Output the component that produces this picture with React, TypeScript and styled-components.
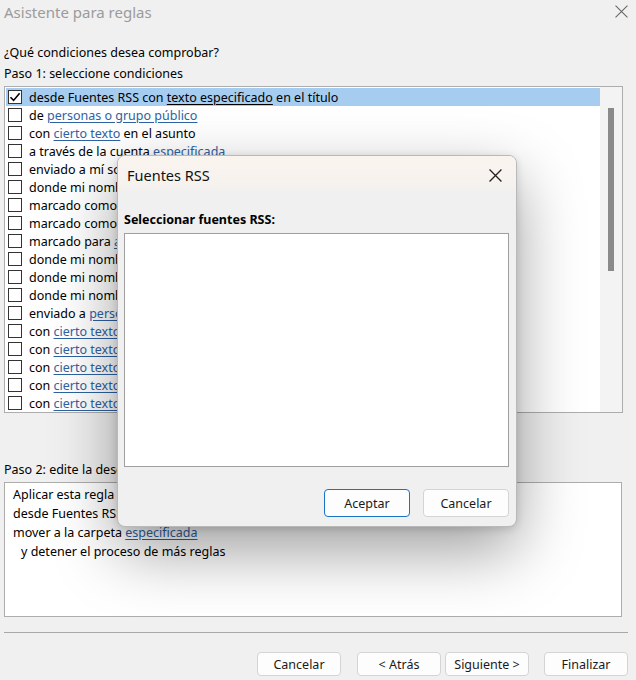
import React from "react";
import styled, { createGlobalStyle } from "styled-components";

const GlobalStyle = createGlobalStyle`
  html, body { margin: 0; padding: 0; background: #f0f0f0; }
  body { font-family: "Segoe UI", "Noto Sans", "Open Sans", sans-serif; color: #000; }
  * { box-sizing: border-box; }
`;

const Window = styled.div`
  position: relative;
  width: 636px;
  height: 680px;
  overflow: hidden;
  background: #f0f0f0;
  font-size: 12.5px;
`;

const TitleBar = styled.div`
  height: 23px;
  display: flex;
  align-items: center;
  justify-content: space-between;
  padding: 0 8px 0 4px;
`;

const TitleText = styled.div`
  font-size: 15px;
  color: #9b9b9b;
`;

const CloseButton = styled.div<{ $size: number; $color: string }>`
  width: ${(p) => p.$size}px;
  height: ${(p) => p.$size}px;
  display: flex;
  align-items: center;
  justify-content: center;
  color: ${(p) => p.$color};
`;

const Body = styled.div`
  padding: 0 4px;
  display: flex;
  flex-direction: column;
`;

const Label = styled.div<{ $top: number }>`
  margin-top: ${(p) => p.$top}px;
  height: 18px;
  line-height: 18px;
  white-space: nowrap;
`;

const ListBox = styled.div`
  margin-top: 3px;
  margin-right: 9px;
  height: 327px;
  border: 1px solid #adadad;
  background: #fff;
  display: flex;
`;

const Rows = styled.div`
  flex: 1;
  padding: 1px 0 0 1px;
  display: flex;
  flex-direction: column;
`;

const Row = styled.div<{ $selected?: boolean }>`
  height: 18px;
  display: flex;
  align-items: center;
  gap: 7px;
  padding-left: 2px;
  white-space: nowrap;
  background: ${(p) => (p.$selected ? "#a6ccf0" : "transparent")};
`;

const Box = styled.div`
  width: 14px;
  height: 14px;
  border: 1px solid #333;
  background: #fff;
  display: flex;
  align-items: center;
  justify-content: center;
  flex-shrink: 0;
`;

const Link = styled.span<{ $plain?: boolean }>`
  color: ${(p) => (p.$plain ? "#000" : "#2e62a3")};
  text-decoration: underline;
  text-underline-offset: 2px;
`;

const ScrollTrack = styled.div`
  width: 22px;
  background: #f3f3f3;
  display: flex;
  justify-content: center;
  padding-top: 21px;
`;

const ScrollThumb = styled.div`
  width: 6px;
  height: 163px;
  background: #8a8a8a;
`;

const DescBox = styled.div`
  margin-top: 3px;
  margin-right: 10px;
  height: 135px;
  border: 1px solid #adadad;
  background: #fff;
  padding: 2px 8px;
  display: flex;
  flex-direction: column;
`;

const DescLine = styled.div<{ $indent?: boolean }>`
  height: 19px;
  line-height: 19px;
  padding-left: ${(p) => (p.$indent ? 8 : 0)}px;
  white-space: nowrap;
`;

const Separator = styled.div`
  margin-top: 15px;
  height: 1px;
  background: #a8a8a8;
  margin-right: 4px;
`;

const Footer = styled.div`
  margin-top: 19px;
  display: flex;
  justify-content: flex-end;
  padding-right: 4px;
  gap: 4px;
`;

const Button = styled.button<{ $gapLeft?: number; $primary?: boolean; $w?: number; $h?: number }>`
  width: ${(p) => p.$w ?? 84}px;
  height: ${(p) => p.$h ?? 24}px;
  margin-left: ${(p) => p.$gapLeft ?? 0}px;
  border: 1px solid ${(p) => (p.$primary ? "#1a73c4" : "#d4d4d4")};
  border-radius: 4px;
  background: #fdfdfd;
  font-family: inherit;
  font-size: 12.5px;
  color: #1a1a1a;
  padding: 0;
  cursor: default;
`;

const Dialog = styled.div`
  position: absolute;
  left: 117px;
  top: 155px;
  width: 400px;
  height: 372px;
  border: 1px solid #b9b9b9;
  border-radius: 8px;
  background: #f0f0f0;
  box-shadow: 0 24px 64px rgba(0, 0, 0, 0.38), 0 2px 8px rgba(0, 0, 0, 0.14);
  overflow: hidden;
  display: flex;
  flex-direction: column;
`;

const DialogHeader = styled.div`
  height: 38px;
  display: flex;
  align-items: center;
  justify-content: space-between;
  padding: 0 14px 0 9px;
  background: linear-gradient(180deg, rgba(250, 244, 238, 1) 0%, rgba(246, 242, 238, 1) 70%, #f0f0f0 100%);
`;

const DialogTitle = styled.div`
  font-size: 14.5px;
  color: #111;
`;

const DialogBody = styled.div`
  flex: 1;
  padding: 17px 7px 0 6px;
  display: flex;
  flex-direction: column;
`;

const BoldLabel = styled.div`
  font-weight: bold;
  font-size: 12.5px;
  height: 18px;
  line-height: 18px;
`;

const FeedList = styled.div`
  margin-top: 4px;
  height: 234px;
  background: #fff;
  border: 1px solid #9f9f9f;
`;

const DialogFooter = styled.div`
  margin-top: 22px;
  display: flex;
  justify-content: flex-end;
  gap: 13px;
`;

const XIcon = ({ size, stroke }: { size: number; stroke: number }) => (
  <svg width={size} height={size} viewBox="0 0 12 12" fill="none">
    <path d="M0.5 0.5 L11.5 11.5 M11.5 0.5 L0.5 11.5" stroke="currentColor" strokeWidth={stroke} />
  </svg>
);

const Check = () => (
  <svg width="12" height="12" viewBox="0 0 12 12" fill="none">
    <path d="M1.5 6.2 L4.6 9.4 L10.6 2.2" stroke="#000" strokeWidth="1.6" />
  </svg>
);

type Part = string | { link: string };

const rows: Part[][] = [
  ["desde Fuentes RSS con ", { link: "texto especificado" }, " en el título"],
  ["de ", { link: "personas o grupo público" }],
  ["con ", { link: "cierto texto" }, " en el asunto"],
  ["a través de la cuenta ", { link: "especificada" }],
  ["enviado a mí solamente"],
  ["donde mi nombre está en el cuadro Para"],
  ["marcado como ", { link: "importancia" }],
  ["marcado como ", { link: "confidencialidad" }],
  ["marcado para ", { link: "acción" }],
  ["donde mi nombre está en el cuadro CC"],
  ["donde mi nombre está en Para o CC"],
  ["donde mi nombre no está en Para"],
  ["enviado a ", { link: "personas o grupo público" }],
  ["con ", { link: "cierto texto" }, " en el cuerpo"],
  ["con ", { link: "cierto texto" }, " en el asunto o cuerpo"],
  ["con ", { link: "cierto texto" }, " en el encabezado"],
  ["con ", { link: "cierto texto" }, " en la dirección del destinatario"],
  ["con ", { link: "cierto texto" }, " en la dirección del remitente"],
];

const renderParts = (parts: Part[], plainLinks = false) =>
  parts.map((p, i) =>
    typeof p === "string" ? (
      <span key={i}>{p}</span>
    ) : (
      <Link key={i} $plain={plainLinks}>
        {p.link}
      </Link>
    )
  );

export default function App() {
  return (
    <>
      <GlobalStyle />
      <Window>
        <TitleBar>
          <TitleText>Asistente para reglas</TitleText>
          <CloseButton $size={14} $color="#666">
            <XIcon size={13} stroke={1} />
          </CloseButton>
        </TitleBar>
        <Body>
          <Label $top={21}>¿Qué condiciones desea comprobar?</Label>
          <Label $top={3}>Paso 1: seleccione condiciones</Label>
          <ListBox>
            <Rows>
              {rows.map((r, i) => (
                <Row key={i} $selected={i === 0}>
                  <Box>{i === 0 && <Check />}</Box>
                  <span>{renderParts(r, i === 0)}</span>
                </Row>
              ))}
            </Rows>
            <ScrollTrack>
              <ScrollThumb />
            </ScrollTrack>
          </ListBox>
          <Label $top={48}>Paso 2: edite la descripción de la regla (haga clic en un valor subrayado):</Label>
          <DescBox>
            <DescLine>Aplicar esta regla después de la llegada del mensaje</DescLine>
            <DescLine>
              desde Fuentes RSS con <Link>texto especificado</Link> en el título
            </DescLine>
            <DescLine>
              mover a la carpeta <Link>especificada</Link>
            </DescLine>
            <DescLine $indent>y detener el proceso de más reglas</DescLine>
          </DescBox>
          <Separator />
          <Footer>
            <Button>Cancelar</Button>
            <Button $gapLeft={12}>&lt; Atrás</Button>
            <Button>Siguiente &gt;</Button>
            <Button $gapLeft={11}>Finalizar</Button>
          </Footer>
        </Body>
        <Dialog>
          <DialogHeader>
            <DialogTitle>Fuentes RSS</DialogTitle>
            <CloseButton $size={14} $color="#222">
              <XIcon size={13} stroke={1.2} />
            </CloseButton>
          </DialogHeader>
          <DialogBody>
            <BoldLabel>Seleccionar fuentes RSS:</BoldLabel>
            <FeedList />
            <DialogFooter>
              <Button $primary $w={86} $h={28}>
                Aceptar
              </Button>
              <Button $w={86} $h={28}>
                Cancelar
              </Button>
            </DialogFooter>
          </DialogBody>
        </Dialog>
      </Window>
    </>
  );
}
